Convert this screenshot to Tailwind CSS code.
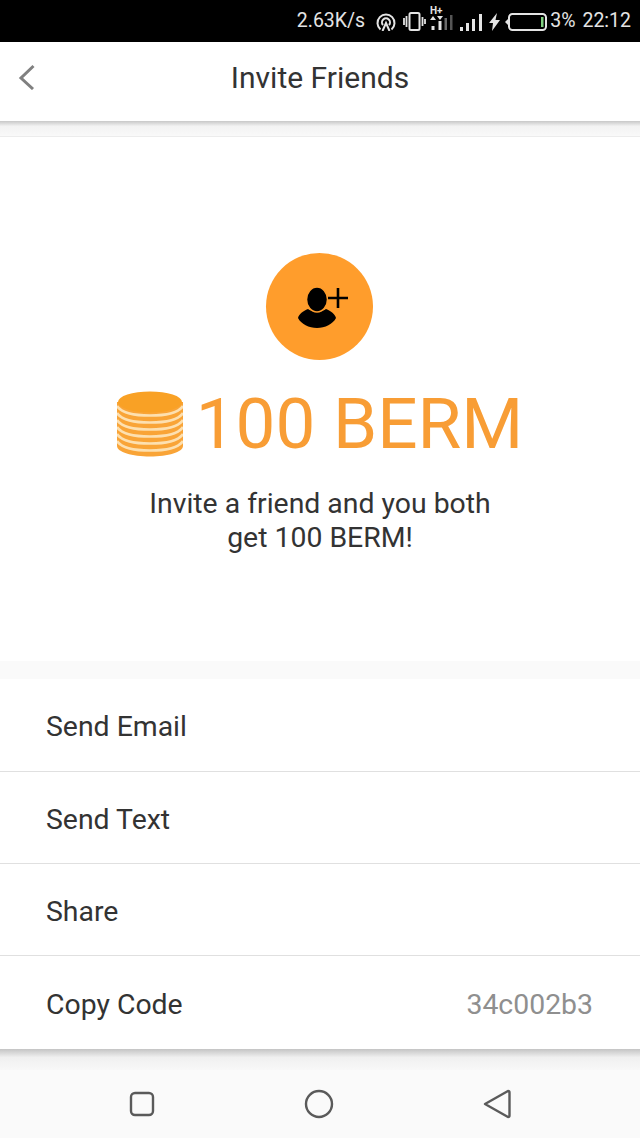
<!DOCTYPE html>
<html lang="en">
  <head>
    <meta charset="UTF-8" />
    <meta name="viewport" content="width=device-width, initial-scale=1.0" />
    <script src="https://cdn.jsdelivr.net/npm/@tailwindcss/browser@4"></script>
    <title>Invite Friends</title>
  </head>
  <body class="bg-white font-['Roboto',sans-serif] text-[#333333]">
    <main class="w-[640px] h-[1138px] flex flex-col overflow-hidden">
      <!-- status bar -->
      <div class="h-[42px] bg-black text-[#e4e4e4] flex items-center justify-end pr-[9px] text-[19.500px] leading-none">
        <span>2.63K/s</span>
        <svg class="ml-[11px] mt-[1px]" width="20" height="18" viewBox="0 0 20 18" fill="none" stroke="#e4e4e4" stroke-width="2">
          <path d="M4.500 16.500a8.500 8.500 0 1 1 11 0" />
          <path d="M7 12a4 4 0 1 1 6 0" />
          <path d="M6.500 18l3.500-8 3.500 8" />
        </svg>
        <svg class="ml-[7px]" width="23" height="19" viewBox="0 0 23 19" fill="none" stroke="#e4e4e4">
          <rect x="6.500" y="1" width="10" height="17" rx="1.500" stroke-width="2" />
          <path d="M1 6v7M3.500 4v11M19.500 5v9M22 7v5" stroke-width="1.800" />
        </svg>
        <svg class="ml-[4px] -mt-[6px]" width="23" height="25" viewBox="0 0 23 25" fill="#e4e4e4">
          <text x="0" y="8" font-size="10" font-weight="700" font-family="Roboto, sans-serif">H+</text>
          <path d="M0 14l3-4 3 4zM7 10l3 4 3-4z" />
          <rect x="1.500" y="20" width="3" height="4" />
          <rect x="8.500" y="15" width="3" height="9" />
          <rect x="14.500" y="12" width="2.500" height="12" fill="#6a6a6a" />
          <rect x="20" y="9" width="2.500" height="15" fill="#555555" />
        </svg>
        <svg class="ml-[7px] mt-[1px]" width="22" height="18" viewBox="0 0 22 18" fill="#e4e4e4">
          <rect x="0" y="14" width="3" height="4" />
          <rect x="6" y="10" width="3" height="8" />
          <rect x="12" y="6" width="3" height="12" />
          <rect x="19" y="1" width="3" height="17" />
        </svg>
        <svg class="ml-[7px] mt-[1px]" width="11" height="18" viewBox="0 0 11 18" fill="#e4e4e4">
          <path d="M8 0L0 10h4L3 18l8-11H6.500z" />
        </svg>
        <svg class="ml-[5px] mt-[1px]" width="42" height="18" viewBox="0 0 42 18" fill="none">
          <path d="M0 9l3-3v6z" fill="#e4e4e4" />
          <rect x="4" y="1" width="37" height="16" rx="3.500" stroke="#e4e4e4" stroke-width="2" />
          <rect x="36" y="4" width="2.500" height="10" fill="#7fd07f" />
        </svg>
        <span class="ml-[3px]">3%</span>
        <span class="ml-[7px]">22:12</span>
      </div>

      <!-- header -->
      <header class="h-[79px] bg-white relative flex items-center justify-center text-[30px]">
        <svg class="absolute left-[18px] top-[22px]" width="18" height="26" viewBox="0 0 18 26" fill="none" stroke="#808080" stroke-width="3">
          <path d="M15.500 2L3 14l12 11" />
        </svg>
        <span class="-mt-[8px]">Invite Friends</span>
      </header>
      <div class="h-[16px] border-b border-[#ececec] bg-gradient-to-b from-[#c8c8c8] via-[#f3f3f3] via-35% to-[#f9f9f9]"></div>

      <!-- hero -->
      <section class="h-[524px] flex flex-col items-center">
        <div class="mt-[116px] -ml-[1px] w-[107px] h-[107px] rounded-full bg-[#ff9d2c] flex items-center justify-center">
          <svg class="ml-[6px] mt-[3px]" width="50" height="42" viewBox="0 0 50 42">
            <path d="M10 22c3 3 15 3 18 0 5 2 9 5 10 9-3 6-11 10-19 10S3 37 0 31c1-4 5-7 10-9z" fill="#000000" />
            <ellipse cx="19" cy="12.500" rx="10.500" ry="12.500" fill="#000000" stroke="#ff9d2c" stroke-width="1.500" />
            <path d="M40 1v20M30 11h20" stroke="#000000" stroke-width="2.600" fill="none" />
          </svg>
        </div>
        <div class="mt-[31px] flex items-center text-[#f89d35]">
          <svg width="66" height="66" viewBox="0 0 66 66">
            <path d="M0 11h66v44c0 6-15 10.500-33 10.500S0 61 0 55z" fill="#f9a437" />
            <g fill="none" stroke="#fde0b0" stroke-width="2.600">
              <path d="M0 15c4 6 16 9.500 33 9.500s29-3.500 33-9.500" />
              <path d="M0 22c4 6 16 9.500 33 9.500s29-3.500 33-9.500" />
              <path d="M0 29c4 6 16 9.500 33 9.500s29-3.500 33-9.500" />
              <path d="M0 36c4 6 16 9.500 33 9.500s29-3.500 33-9.500" />
              <path d="M0 43c4 6 16 9.500 33 9.500s29-3.500 33-9.500" />
              <path d="M0 50c4 6 16 9.500 33 9.500s29-3.500 33-9.500" />
            </g>
            <ellipse cx="33" cy="11" rx="32" ry="10.500" fill="#f9a125" />
          </svg>
          <span class="ml-[13px] text-[71px] leading-[66px]">100 BERM</span>
        </div>
        <p class="mt-[30px] text-center text-[28.400px] leading-[34px]">Invite a friend and you both<br />get 100 BERM!</p>
      </section>

      <div class="h-[18px] bg-[#fafafa]"></div>

      <!-- actions -->
      <ul class="text-[28.400px] divide-y divide-[#e0e0e0]">
        <li class="h-[93px] flex items-center pt-[5px] px-[46px]">Send Email</li>
        <li class="h-[92px] flex items-center pt-[5px] px-[46px]">Send Text</li>
        <li class="h-[92px] flex items-center pt-[5px] px-[46px]">Share</li>
        <li class="h-[93px] flex items-center justify-between pt-[5px] pl-[46px] pr-[47px]">
          <span>Copy Code</span>
          <span class="text-[#8f8f8f]">34c002b3</span>
        </li>
      </ul>
      <div class="h-[21px] bg-gradient-to-b from-[#c4c4c4] via-[#f0f0f0] via-40% to-[#f8f8f8]"></div>

      <!-- nav bar -->
      <nav class="flex-1 bg-[#fafafa] flex items-center justify-center gap-[149px]">
        <svg width="26" height="26" viewBox="0 0 26 26" fill="none" stroke="#5a5a5a" stroke-width="2.400">
          <rect x="2" y="2" width="22" height="22" rx="4" />
        </svg>
        <svg width="30" height="30" viewBox="0 0 30 30" fill="none" stroke="#5a5a5a" stroke-width="2.400">
          <circle cx="15" cy="15" r="13" />
        </svg>
        <svg width="28" height="30" viewBox="0 0 28 30" fill="none" stroke="#5a5a5a" stroke-width="2.400" stroke-linejoin="round">
          <path d="M2 15L25 2c1 0 1.500 .5 1.500 1.500v23c0 1-.5 1.500-1.500 1.500z" />
        </svg>
      </nav>
    </main>
  </body>
</html>
